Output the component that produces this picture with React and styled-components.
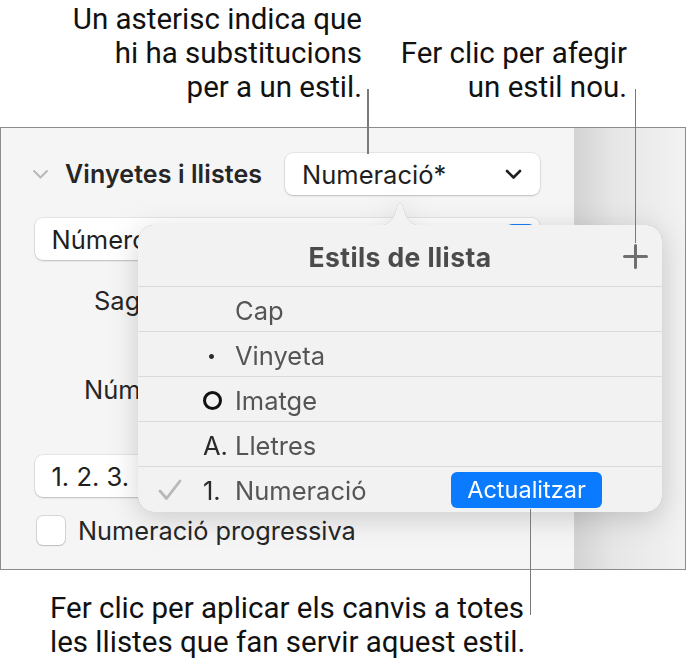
import React from "react";
import styled, { createGlobalStyle } from "styled-components";

const GlobalStyle = createGlobalStyle`
  html, body { margin: 0; padding: 0; background: #ffffff; }
  body { font-family: Inter, "Noto Sans", sans-serif; -webkit-font-smoothing: antialiased; }
  * { box-sizing: border-box; }
`;

const UI = `Inter, "Noto Sans", sans-serif`;

const Figure = styled.div`
  position: relative;
  width: 686px;
  height: 665px;
  overflow: hidden;
  background: #ffffff;
`;

const TopNotes = styled.div`
  display: flex;
  height: 127px;
`;

const Note = styled.div`
  font-family: Roboto, "Liberation Sans", sans-serif;
  font-size: 29.5px;
  line-height: 34px;
  color: #111111;
  text-align: ${(p) => p.$align || "left"};
  width: ${(p) => (p.$width ? `${p.$width}px` : "auto")};
  padding-top: ${(p) => p.$top || 0}px;
  white-space: nowrap;
`;

const Leader = styled.div`
  position: absolute;
  left: ${(p) => p.$x}px;
  top: ${(p) => p.$y}px;
  width: 1.5px;
  height: ${(p) => p.$h}px;
  background: #7b7b7b;
`;

const Frame = styled.div`
  display: flex;
  height: 443px;
  border: 1.5px solid #8c8c8c;
`;

const Sidebar = styled.div`
  width: 574px;
  background: #f5f5f5;
  border-right: 1px solid #d6d6d6;
  padding: 25px 34px 0 0;
  display: flex;
  flex-direction: column;
  font-family: ${UI};
`;

const Canvas = styled.div`
  flex: 1;
  background: linear-gradient(to right, #d3d3d3 0%, #e6e6e6 35%, #f2f2f2 100%);
`;

const HeaderRow = styled.div`
  display: grid;
  grid-template-columns: 33px 1fr 255px;
  align-items: center;
  height: 42px;
  padding-left: 31px;
`;

const SectionTitle = styled.div`
  font-size: 25px;
  font-weight: 600;
  color: #262626;
  letter-spacing: 0.1px;
`;

const PopupButton = styled.div`
  display: flex;
  align-items: center;
  justify-content: space-between;
  height: 42px;
  background: #ffffff;
  border-radius: 8px;
  box-shadow: 0 0 0 0.5px rgba(0, 0, 0, 0.12), 0 1px 2px rgba(0, 0, 0, 0.18);
  padding: 0 ${(p) => p.$padRight || 18}px 0 17px;
  margin-left: ${(p) => p.$left || 0}px;
  margin-top: ${(p) => p.$top || 0}px;
  font-size: 25.5px;
  color: #1f1f1f;
`;

const BlueStepper = styled.div`
  width: 29px;
  height: 30px;
  border-radius: 6px;
  background: #1a7dfa;
`;

const FieldLabel = styled.div`
  height: ${(p) => p.$h}px;
  padding-top: ${(p) => p.$top}px;
  padding-left: ${(p) => p.$left}px;
  font-size: 25.5px;
  line-height: 24px;
  color: #262626;
`;

const CheckRow = styled.div`
  display: flex;
  align-items: center;
  gap: 13px;
  margin: 18px 0 0 36px;
  font-size: 25.3px;
  color: #262626;
`;

const CheckBox = styled.div`
  width: 28px;
  height: 29px;
  border-radius: 6px;
  background: #ffffff;
  box-shadow: 0 0 0 1px rgba(0, 0, 0, 0.12), 0 1px 1.5px rgba(0, 0, 0, 0.12);
`;

const BottomNote = styled(Note)`
  padding-top: 21px;
  padding-left: 50px;
`;

const Popover = styled.div`
  position: absolute;
  left: 138px;
  top: 225px;
  width: 524px;
  height: 287px;
  background: #f2f2f3;
  border-radius: 16px;
  filter: drop-shadow(0 0 0.6px rgba(0, 0, 0, 0.35)) drop-shadow(0 6px 14px rgba(0, 0, 0, 0.17));
  display: flex;
  flex-direction: column;
  font-family: ${UI};
`;

const Arrow = styled.svg`
  position: absolute;
  top: -26px;
  left: 237px;
`;

const PopHeader = styled.div`
  display: grid;
  grid-template-columns: 1fr auto 1fr;
  align-items: center;
  height: 61px;
  padding: 2px 14px 0 14px;
`;

const PopTitle = styled.div`
  grid-column: 2;
  font-size: 26.5px;
  font-weight: 700;
  color: #4b4b4b;
  letter-spacing: 0.4px;
`;

const PlusIcon = styled.svg`
  justify-self: end;
`;

const StyleRow = styled.div`
  display: grid;
  grid-template-columns: 65px 32px 1fr auto;
  align-items: center;
  height: 45px;
  border-top: 1.5px solid #d9d9da;
  padding: 2px 60px 0 0;
  font-size: 25.5px;
  color: #555555;
`;

const Marker = styled.div`
  grid-column: 2;
  color: #2a2a2a;
  display: flex;
  align-items: center;
`;

const Bullet = styled.span`
  padding-left: 4px;
  font-size: 16px;
`;

const Label = styled.div`
  grid-column: 3;
  color: #555555;
`;

const UpdateButton = styled.div`
  grid-column: 4;
  height: 36px;
  width: 151px;
  border-radius: 6px;
  background: #0a7bff;
  color: #ffffff;
  font-size: 23.5px;
  display: flex;
  align-items: center;
  justify-content: center;
  margin-top: -1px;
`;

const CheckMark = styled.svg`
  grid-column: 1;
  margin-left: 20px;
`;

const Ring = styled.div`
  width: 19px;
  height: 19px;
  border: 3px solid #111111;
  border-radius: 50%;
`;

const styles = [
  { name: "Cap" },
  { name: "Vinyeta", marker: <Bullet>•</Bullet> },
  { name: "Imatge", marker: <Ring /> },
  { name: "Lletres", marker: "A." },
  { name: "Numeració", marker: "1.", current: true },
];

export default function App() {
  return (
    <>
      <GlobalStyle />
      <Figure>
        <TopNotes>
          <Note $align="right" $width={362} $top={2}>
            Un asterisc indica que
            <br />
            hi ha substitucions
            <br />
            per a un estil.
          </Note>
          <Note $align="right" $width={265} $top={36}>
            Fer clic per afegir
            <br />
            un estil nou.
          </Note>
        </TopNotes>

        <Frame>
          <Sidebar>
            <HeaderRow>
              <svg width="17" height="11" viewBox="0 0 17 11">
                <path d="M2 2 L8.5 8.5 L15 2" fill="none" stroke="#b9b9b9" strokeWidth="2" strokeLinecap="round" strokeLinejoin="round" />
              </svg>
              <SectionTitle>Vinyetes i llistes</SectionTitle>
              <PopupButton>
                <span>Numeració*</span>
                <svg width="17" height="11" viewBox="0 0 17 11">
                  <path d="M2 2 L8.5 8.5 L15 2" fill="none" stroke="#1f1f1f" strokeWidth="2.6" strokeLinecap="round" strokeLinejoin="round" />
                </svg>
              </PopupButton>
            </HeaderRow>
            <PopupButton $left={33.5} $top={23} $padRight={5}>
              <span>Números</span>
              <BlueStepper />
            </PopupButton>
            <FieldLabel $h={82} $top={29} $left={93}>Sagnat</FieldLabel>
            <FieldLabel $h={90} $top={36} $left={83}>Número</FieldLabel>
            <PopupButton $left={33.5} $top={23}>
              <span>1. 2. 3.</span>
            </PopupButton>
            <CheckRow>
              <CheckBox />
              <span>Numeració progressiva</span>
            </CheckRow>
          </Sidebar>
          <Canvas />
        </Frame>

        <BottomNote>
          Fer clic per aplicar els canvis a totes
          <br />
          les llistes que fan servir aquest estil.
        </BottomNote>

        <Popover>
          <Arrow width="50" height="27" viewBox="0 0 50 27">
            <path d="M0 27 C10 27 15 24 19 17 L23 5 Q25 1 27 5 L31 17 C35 24 40 27 50 27 Z" fill="#f2f2f3" />
          </Arrow>
          <PopHeader>
            <PopTitle>Estils de llista</PopTitle>
            <PlusIcon width="25" height="25" viewBox="0 0 25 25">
              <path d="M12.5 1.5 V23.5 M1.5 12.5 H23.5" stroke="#6f6f6f" strokeWidth="3" strokeLinecap="round" />
            </PlusIcon>
          </PopHeader>
          {styles.map((s) => (
            <StyleRow key={s.name}>
              {s.current && (
                <CheckMark width="24" height="22" viewBox="0 0 24 22">
                  <path d="M2 12 L8.5 19.5 L22 2" fill="none" stroke="#b8b8b8" strokeWidth="2.8" strokeLinecap="round" strokeLinejoin="round" />
                </CheckMark>
              )}
              {s.marker && <Marker>{s.marker}</Marker>}
              <Label>{s.name}</Label>
              {s.current && <UpdateButton>Actualitzar</UpdateButton>}
            </StyleRow>
          ))}
        </Popover>

        <Leader $x={367} $y={89} $h={65} />
        <Leader $x={634.5} $y={89} $h={154} />
        <Leader $x={529.5} $y={509} $h={106} />
      </Figure>
    </>
  );
}
